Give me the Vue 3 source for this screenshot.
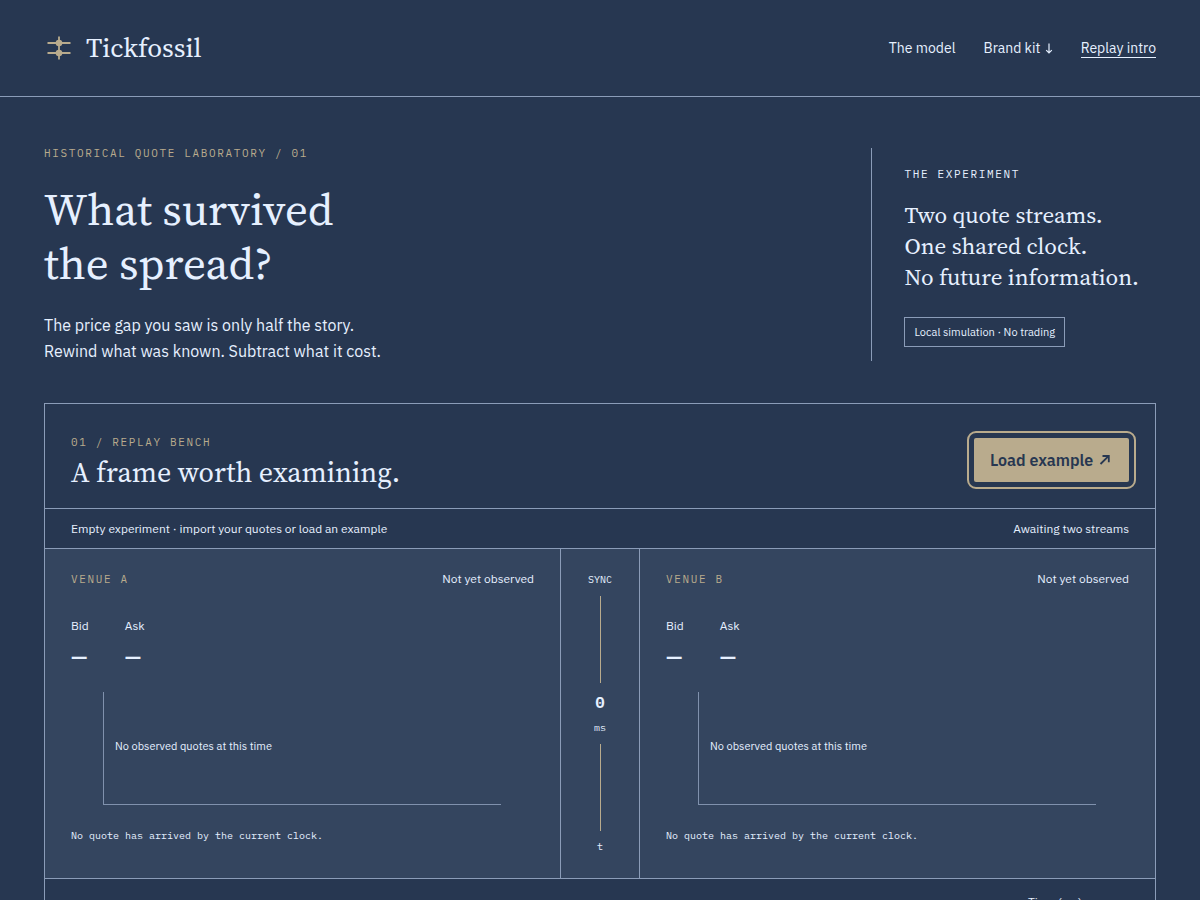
<script setup>
const venues = [
  { id: 'a', name: 'VENUE A' },
  { id: 'b', name: 'VENUE B' },
]
</script>

<template>
  <div class="page">
    <header class="top">
      <a class="brand" href="#">
        <svg class="mark" viewBox="0 0 24 24" aria-hidden="true">
          <path d="M0.5 7H23.5M0.5 17H23.5M12 0.5V23.5" />
          <circle cx="12" cy="7" r="3.3" />
          <circle cx="12" cy="17" r="3.3" />
        </svg>
        <span>Tickfossil</span>
      </a>
      <nav class="nav">
        <a href="#model">The model</a>
        <a href="#kit">Brand kit <svg class="arrow" viewBox="0 0 8 12" aria-hidden="true"><path d="M4 0.5V10M1.2 7.2L4 10L6.8 7.2" /></svg></a>
        <button type="button" class="replay">Replay intro</button>
      </nav>
    </header>

    <main class="main">
      <section class="hero">
        <div class="pitch">
          <p class="eyebrow">HISTORICAL QUOTE LABORATORY / 01</p>
          <h1>What survived<br />the spread?</h1>
          <p class="lead">The price gap you saw is only half the story.<br />Rewind what was known. Subtract what it cost.</p>
        </div>
        <aside class="experiment">
          <p class="eyebrow light">THE EXPERIMENT</p>
          <p class="claims">Two quote streams.<br />One shared clock.<br />No future information.</p>
          <p class="tag">Local simulation · No trading</p>
        </aside>
      </section>

      <section class="bench">
        <div class="bench-head">
          <div>
            <p class="eyebrow">01 / REPLAY BENCH</p>
            <h2>A frame worth examining.</h2>
          </div>
          <button type="button" class="load">
            Load example
            <svg class="arrow-out" viewBox="0 0 12 12" aria-hidden="true"><path d="M1.5 10L9.5 2.2M3.5 2H9.8V8.3" /></svg>
          </button>
        </div>
        <div class="status">
          <span>Empty experiment · import your quotes or load an example</span>
          <span>Awaiting two streams</span>
        </div>
        <div class="streams">
          <article v-for="v in venues" :key="v.id" class="venue" :class="v.id">
            <div class="venue-head">
              <h3 class="eyebrow">{{ v.name }}</h3>
              <span>Not yet observed</span>
            </div>
            <dl class="quotes">
              <div><dt>Bid</dt><dd>—</dd></div>
              <div><dt>Ask</dt><dd>—</dd></div>
            </dl>
            <div class="chart">No observed quotes at this time</div>
            <p class="note">No quote has arrived by the current clock.</p>
          </article>
          <div class="sync">
            <span>SYNC</span>
            <i class="wire"></i>
            <strong>0</strong>
            <span class="unit">ms</span>
            <i class="wire"></i>
            <span class="axis">t</span>
          </div>
        </div>
        <div class="clock">
          <label for="time">Time (ms)</label>
          <input id="time" type="number" value="0" />
        </div>
      </section>
    </main>
  </div>
</template>

<style>
body {
  margin: 0;
  background: #273751;
}
</style>

<style scoped>
.page {
  --ink: #273751;
  --text: #e6f0ff;
  --line: #8b9cb8;
  --sand: #b9ab8d;
  --mono: "IBM Plex Mono", "Liberation Mono", monospace;
  --serif: "Source Serif 4", "Liberation Serif", serif;
  background: var(--ink);
  color: var(--text);
  font: 12px/18px "IBM Plex Sans", "Noto Sans", sans-serif;
}
p, h1, h2, h3, dl, dd {
  margin: 0;
  font-weight: 400;
}
a {
  color: inherit;
  text-decoration: none;
}
button {
  font: inherit;
  color: inherit;
  background: none;
  border: 0;
  padding: 0;
  cursor: pointer;
}
.top {
  display: flex;
  align-items: center;
  justify-content: space-between;
  height: 96px;
  padding: 0 44px;
  border-bottom: 1px solid var(--line);
}
.brand {
  display: flex;
  align-items: center;
  gap: 12px;
  padding-left: 3px;
  font: 27px/36px var(--serif);
}
.mark {
  width: 24px;
  height: 24px;
  margin-right: 3px;
  fill: var(--sand);
  stroke: var(--sand);
}
.mark path {
  stroke-width: 1.8;
}
.mark circle {
  stroke: none;
}
.nav {
  display: flex;
  align-items: center;
  gap: 28px;
  font-size: 14px;
}
.arrow {
  width: 8px;
  height: 12px;
  margin-left: 1px;
  vertical-align: -2px;
}
.arrow path,
.arrow-out path {
  fill: none;
  stroke: currentColor;
  stroke-width: 1.2;
}
.replay {
  border-bottom: 1px solid var(--text);
}
.main {
  padding: 51px 44px 0;
}
.hero {
  display: flex;
  align-items: flex-start;
  justify-content: space-between;
  margin-bottom: 39px;
}
.eyebrow {
  font: 11px/14px var(--mono);
  letter-spacing: 0.15em;
  color: var(--sand);
}
.eyebrow.light {
  color: var(--text);
}
.pitch .eyebrow {
  margin-top: -2px;
}
h1 {
  margin: 22px 0;
  font: 45px/54px var(--serif);
}
.lead {
  font-size: 16px;
  line-height: 26px;
}
.experiment {
  padding: 19px 17px 14px 32px;
  border-left: 1px solid var(--line);
}
.claims {
  margin: 19px 0 24px;
  font: 23px/31px var(--serif);
}
.tag {
  width: fit-content;
  padding: 5px 9px;
  border: 1px solid var(--line);
  font-size: 11px;
}
.bench {
  border: 1px solid var(--line);
}
.bench-head {
  display: flex;
  align-items: center;
  justify-content: space-between;
  padding: 28px 26px 20px;
  border-bottom: 1px solid var(--line);
}
.bench-head .eyebrow {
  margin-top: 3px;
}
h2 {
  margin-top: 8px;
  font: 28px/31px var(--serif);
}
.load {
  height: 44px;
  padding: 0 16px;
  border-radius: 2px;
  background: var(--sand);
  color: var(--ink);
  font-size: 16px;
  font-weight: 600;
  outline: 2px solid var(--sand);
  outline-offset: 5px;
}
.arrow-out {
  width: 12px;
  height: 12px;
  margin: 0 2px;
}
.arrow-out path {
  stroke-width: 1.8;
}
.status {
  display: flex;
  justify-content: space-between;
  padding: 11px 26px 10px;
  border-bottom: 1px solid var(--line);
}
.streams {
  display: grid;
  grid-template-columns: 1fr 80px 1fr;
  background: #34455f;
  border-bottom: 1px solid var(--line);
}
.venue {
  grid-row: 1;
  padding: 21px 26px 35px;
}
.venue.a {
  grid-column: 1;
}
.venue.b {
  grid-column: 3;
}
.venue-head {
  display: flex;
  align-items: center;
  justify-content: space-between;
}
.quotes {
  display: flex;
  gap: 36px;
  margin-top: 29px;
}
dd {
  margin-top: 8px;
  font: 600 21px/26px "IBM Plex Sans", "Noto Sans", sans-serif;
}
.chart {
  display: flex;
  align-items: center;
  height: 108px;
  margin: 23px 33px 0 32px;
  padding-left: 11px;
  padding-bottom: 4px;
  border: solid #8091ad;
  border-width: 0 0 1px 1px;
  font-size: 11px;
}
.note {
  margin-top: 24px;
  font: 10px/14px var(--mono);
}
.sync {
  grid-row: 1;
  grid-column: 2;
  display: flex;
  flex-direction: column;
  align-items: center;
  padding: 24px 0;
  border: solid var(--line);
  border-width: 0 1px;
  font: 10px/14px var(--mono);
}
.wire {
  flex: 1;
  width: 1px;
  margin: 9px 0;
  background: var(--sand);
}
.sync strong {
  font-size: 15px;
  line-height: 22px;
}
.unit {
  margin-top: 7px;
}
.clock {
  display: flex;
  flex-direction: column;
  align-items: flex-start;
  width: 101px;
  margin-left: auto;
  padding: 14px 26px 24px;
}
.clock input {
  box-sizing: border-box;
  width: 100%;
  height: 40px;
  margin-top: 6px;
  border: 1px solid var(--line);
  background: var(--ink);
  color: var(--text);
  font: 14px var(--mono);
}
</style>
